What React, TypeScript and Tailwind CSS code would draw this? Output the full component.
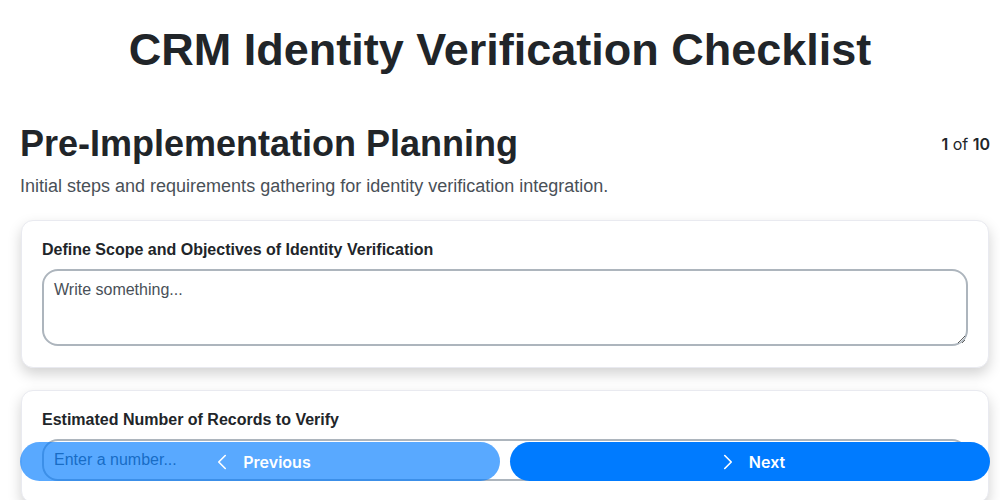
import { ChevronLeft, ChevronRight } from 'lucide-react'

const sans = { fontFamily: '"Liberation Sans", Arial, sans-serif' }

function FieldCard({ label, children }: { label: string; children: React.ReactNode }) {
  return (
    <div className="mx-px rounded-xl border border-[#e9eaf0] bg-white px-5 pt-[19px] pb-[21px] shadow-[0_6px_14px_rgba(0,0,0,0.18)]">
      <label className="mb-[9px] block text-[16px] font-bold leading-[20px] text-[#212529]">{label}</label>
      {children}
    </div>
  )
}

export default function App() {
  return (
    <div className="relative h-[500px] overflow-hidden bg-white text-[#212529]" style={sans}>
      <h1 className="pt-[22px] text-center text-[45px] font-bold leading-[56px]">CRM Identity Verification Checklist</h1>

      <div className="pl-5 pr-[10px] pt-[43px]">
        <div className="flex items-start justify-between">
          <h2 className="text-[36px] font-bold leading-[46px]">Pre-Implementation Planning</h2>
          <div className="pt-[11px] text-[16px] text-[#212529]" style={{ fontFamily: 'Inter, sans-serif' }}>
            <span className="font-semibold">1</span> of <span className="font-semibold">10</span>
          </div>
        </div>
        <p className="mt-[6px] text-[18px] text-[#495057]">
          Initial steps and requirements gathering for identity verification integration.
        </p>

        <div className="mt-[20px] flex flex-col gap-[22px]">
          <FieldCard label="Define Scope and Objectives of Identity Verification">
            <textarea
              placeholder="Write something..."
              className="block h-[77px] w-full rounded-2xl border-2 border-[#adb5bd] px-[10px] py-[7px] text-[16px] text-[#212529] placeholder:text-[#495057] outline-none"
              style={sans}
            />
          </FieldCard>
          <FieldCard label="Estimated Number of Records to Verify">
            <input
              type="number"
              placeholder="Enter a number..."
              className="block h-[42px] w-full rounded-2xl border-2 border-[#adb5bd] px-[10px] text-[16px] placeholder:text-[#495057] outline-none"
              style={sans}
            />
          </FieldCard>
        </div>
      </div>

      <div className="fixed bottom-[19px] left-5 right-[10px] flex gap-[10px]" style={{ fontFamily: 'Inter, sans-serif' }}>
        <button className="flex h-[39px] flex-1 items-center justify-center gap-[8px] rounded-full bg-[#007bff] text-[16px] font-semibold text-white opacity-65">
          <ChevronLeft className="h-[26px] w-[26px]" strokeWidth={1.5} />
          Previous
        </button>
        <button className="flex h-[39px] flex-1 items-center justify-center gap-[8px] rounded-full bg-[#007bff] text-[16px] font-semibold text-white">
          <ChevronRight className="h-[26px] w-[26px]" strokeWidth={1.5} />
          Next
        </button>
      </div>
    </div>
  )
}
